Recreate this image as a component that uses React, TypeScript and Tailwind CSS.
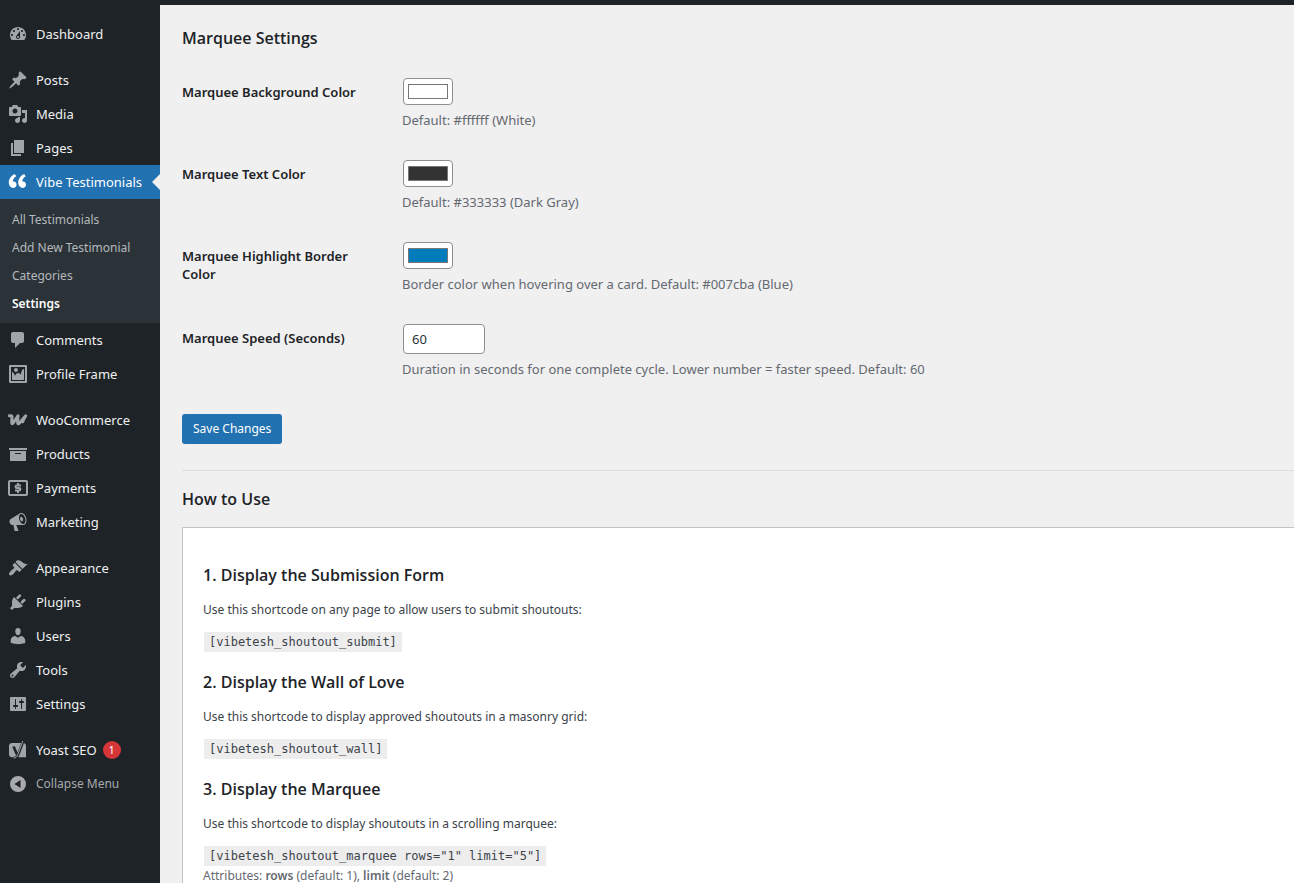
import type { ReactNode } from 'react';
import { clsx } from 'clsx';

const paths = {
  dashboard:
    'M3.76 16h12.48c1.1-1.37 1.76-3.11 1.76-5 0-4.42-3.58-8-8-8s-8 3.58-8 8c0 1.89.66 3.63 1.76 5zM10 4c.55 0 1 .45 1 1s-.45 1-1 1-1-.45-1-1 .45-1 1-1zM6 6c.55 0 1 .45 1 1s-.45 1-1 1-1-.45-1-1 .45-1 1-1zm8 0c.55 0 1 .45 1 1s-.45 1-1 1-1-.45-1-1 .45-1 1-1zm-5.37 5.55L12 7v6c0 1.1-.9 2-2 2s-2-.9-2-2c0-.57.24-1.08.63-1.45zM4 10c.55 0 1 .45 1 1s-.45 1-1 1-1-.45-1-1 .45-1 1-1zm12 0c.55 0 1 .45 1 1s-.45 1-1 1-1-.45-1-1 .45-1 1-1zm-5 3c0-.55-.45-1-1-1s-1 .45-1 1 .45 1 1 1 1-.45 1-1z',
  pin: 'M10.44 3.02l1.82-1.82 6.36 6.35-1.83 1.82c-1.05-.68-2.48-.57-3.41.36l-.75.75c-.92.93-1.04 2.35-.35 3.41l-1.83 1.82-2.41-2.41-2.8 2.79c-.42.42-3.38 2.71-3.8 2.29s1.86-3.39 2.28-3.81l2.79-2.79L4.1 9.36l1.83-1.82c1.05.69 2.48.57 3.4-.36l.75-.75c.93-.92 1.05-2.35.36-3.41z',
  media:
    'M13 11V4c0-.55-.45-1-1-1h-1.67L9 1H5L3.67 3H2c-.55 0-1 .45-1 1v7c0 .55.45 1 1 1h10c.55 0 1-.45 1-1zM7 4.5c1.38 0 2.5 1.12 2.5 2.5S8.38 9.5 7 9.5 4.5 8.38 4.5 7 5.62 4.5 7 4.5zM14 6h5v10.5c0 1.38-1.12 2.5-2.5 2.5S14 17.88 14 16.5s1.12-2.5 2.5-2.5c.17 0 .34.02.5.05V9h-3V6zm-4 8.05V13h2v3.5c0 1.38-1.12 2.5-2.5 2.5S7 17.88 7 16.5 8.12 14 9.5 14c.17 0 .34.02.5.05z',
  page: 'M6 15V2h10v13H6zm-1 1h8v2H3V5h2v11z',
  quote:
    'M8.54 12.74c0-.87-.24-1.61-.72-2.22-.73-.92-2.14-1.03-2.96-.85-.34-1.93 1.3-4.39 3.42-5.45L6.65 1.94C3.45 3.46.31 6.96.85 11.37 1.19 14.16 2.8 16 5.08 16c1 0 1.83-.29 2.48-.88.66-.59.98-1.38.98-2.38zm9.43 0c0-.87-.24-1.61-.72-2.22-.73-.92-2.14-1.03-2.96-.85-.34-1.93 1.3-4.39 3.42-5.45l-1.63-2.28c-3.2 1.52-6.34 5.02-5.8 9.43.34 2.79 1.95 4.63 4.23 4.63 1 0 1.83-.29 2.48-.88.66-.59.98-1.38.98-2.38z',
  comment: 'M5 2h9c1.1 0 2 .9 2 2v7c0 1.1-.9 2-2 2h-2l-5 5v-5H5c-1.1 0-2-.9-2-2V4c0-1.1.9-2 2-2z',
  image:
    'M2.25 1h15.5c.69 0 1.25.56 1.25 1.25v15.5c0 .69-.56 1.25-1.25 1.25H2.25C1.56 19 1 18.44 1 17.75V2.25C1 1.56 1.56 1 2.25 1zM17 17V3H3v14h14zM10 6c0-1.1-.9-2-2-2s-2 .9-2 2 .9 2 2 2 2-.9 2-2zm3 5s0-6 3-6v10c0 .55-.45 1-1 1H5c-.55 0-1-.45-1-1V8c2 0 3 4 3 4s1-3 3-3 3 2 3 2z',
  archive: 'M19 4v2H1V4h18zM2 7h16v10H2V7zm11 3V9H7v1h6z',
  megaphone:
    'M18.15 5.94c.46 1.62.38 3.22-.02 4.48-.42 1.28-1.26 2.18-2.3 2.48-.16.06-.26.06-.4.06-.06.02-.12.02-.18.02-.06.02-.14.02-.22.02h-6.8l2.22 5.5c.02.14-.06.26-.14.34-.08.1-.24.16-.34.16H6.95c-.1 0-.26-.06-.34-.16-.08-.08-.16-.2-.14-.34l-1-5.5H4.25l-.02-.02c-.5.06-1.08-.18-1.54-.62s-.88-1.08-1.06-1.88c-.24-.8-.2-1.56-.02-2.2.18-.62.58-1.08 1.06-1.3l.02-.02 9-5.4c.1-.06.18-.1.24-.16.06-.04.14-.08.24-.12.16-.08.28-.12.5-.18 1.04-.3 2.24.1 3.22.98s1.84 2.24 2.26 3.86zm-2.58 5.98h-.02c.4-.1.74-.34 1.04-.7.58-.7.86-1.76.86-3.04 0-.64-.1-1.3-.28-1.98-.34-1.36-1.02-2.5-1.78-3.24s-1.68-1.1-2.46-.88c-.82.22-1.4.96-1.7 2-.32 1.04-.28 2.36.06 3.72.38 1.36 1 2.5 1.8 3.24.78.74 1.62 1.1 2.48.88zm-2.54-7.08c.22-.04.42-.02.62.04.38.16.76.48 1.02 1s.42 1.2.42 1.78c0 .3-.04.56-.12.8-.18.48-.44.84-.86.94-.34.1-.8-.06-1.14-.4s-.64-.86-.78-1.5c-.18-.62-.12-1.24.02-1.72s.48-.84.82-.94z',
  brush:
    'M14.48 11.06L7.41 3.99l1.5-1.5c.5-.56 2.3-.47 3.51.32 1.21.8 1.43 1.28 2.91 2.1 1.18.64 2.45 1.26 4.45.85zm-.71.71L6.7 4.7 4.93 6.47c-.39.39-.39 1.02 0 1.41l1.06 1.06c.39.39.39 1.03 0 1.42-.6.6-1.43 1.11-2.21 1.69-.35.26-.7.53-1.01.84C1.43 14.23.4 16.08 1.4 17.07c.99 1 2.84-.03 4.18-1.36.31-.31.58-.66.85-1.02.57-.78 1.08-1.61 1.69-2.21.39-.39 1.02-.39 1.41 0l1.06 1.06c.39.39 1.02.39 1.41 0z',
  plug: 'M13.11 4.36L9.87 7.6 8 5.73l3.24-3.24c.35-.34 1.05-.2 1.56.32.52.51.66 1.21.31 1.55zm-8 1.77l.91-1.12 9.01 9.01-1.19.84c-.71.71-2.63 1.16-3.82 1.16H6.14L4.9 17.26c-.59.59-1.54.59-2.12 0-.59-.58-.59-1.53 0-2.12l1.24-1.24v-3.88c0-1.13.4-3.19 1.09-3.89zm7.26 3.97l3.24-3.24c.34-.35 1.04-.21 1.55.31.52.51.66 1.21.31 1.55l-3.24 3.25z',
  user: 'M10 9.25c-2.27 0-2.73-3.44-2.73-3.44C7 4.02 7.82 2 9.97 2c2.16 0 2.98 2.02 2.71 3.81 0 0-.41 3.44-2.68 3.44zm0 2.57L12.72 10c2.39 0 4.52 2.33 4.52 4.53v2.49s-3.65 1.13-7.24 1.13c-3.65 0-7.24-1.13-7.24-1.13v-2.49c0-2.25 1.94-4.48 4.47-4.48z',
  wrench:
    'M16.68 9.77c-1.34 1.34-3.3 1.67-4.95.99l-5.41 6.52c-.99.99-2.59.99-3.58 0s-.99-2.59 0-3.57l6.52-5.42c-.68-1.65-.35-3.61.99-4.95 1.28-1.28 3.12-1.62 4.72-1.06l-2.89 2.89 2.82 2.82 2.86-2.87c.53 1.58.18 3.39-1.08 4.65zM3.81 16.21c.4.39 1.04.39 1.43 0 .4-.4.4-1.04 0-1.43-.39-.4-1.03-.4-1.43 0-.39.39-.39 1.03 0 1.43z',
  sliders:
    'M18 16V4c0-.55-.45-1-1-1H3c-.55 0-1 .45-1 1v12c0 .55.45 1 1 1h14c.55 0 1-.45 1-1zM8 11h1c.55 0 1 .45 1 1s-.45 1-1 1H8v1.5c0 .28-.22.5-.5.5s-.5-.22-.5-.5V13H6c-.55 0-1-.45-1-1s.45-1 1-1h1V5.5c0-.28.22-.5.5-.5s.5.22.5.5V11zm5-2h-1c-.55 0-1-.45-1-1s.45-1 1-1h1V5.5c0-.28.22-.5.5-.5s.5.22.5.5V7h1c.55 0 1 .45 1 1s-.45 1-1 1h-1v5.5c0 .28-.22.5-.5.5s-.5-.22-.5-.5V9z',
  collapse: 'M10 2a8 8 0 1 0 0 16a8 8 0 1 0 0-16zM12.5 6v8L6.5 10z',
};

function Icon({ children }: { children: ReactNode }) {
  return (
    <svg viewBox="0 0 20 20" className="h-5 w-5 shrink-0" fill="currentColor" aria-hidden="true">
      {children}
    </svg>
  );
}

const glyph = (name: keyof typeof paths) => (
  <Icon>
    <path fillRule="evenodd" d={paths[name]} />
  </Icon>
);

const wooIcon = (
  <Icon>
    <path
      d="M1.2 5.8h1.600c.9 0 1.300.5 1.200 1.500l-.3 5c0 1.700.8 1.900 1.700.5L10 5.800l-.4 6.500c0 1.700.9 2 1.900.6L17.700 5.800c-1.200 2-2.700 4.500-2.900 6"
      fill="none"
      stroke="currentColor"
      strokeWidth="3"
      strokeLinecap="round"
      strokeLinejoin="round"
    />
  </Icon>
);

const paymentsIcon = (
  <Icon>
    <rect x="1" y="3" width="18" height="14" rx="1" fill="none" stroke="currentColor" strokeWidth="2" />
    <path
      d="M13 7.400H8.900a1.300 1.300 0 0 0 0 2.600h2.200a1.300 1.300 0 0 1 0 2.600H7M10 5v2.400M10 12.600V15"
      fill="none"
      stroke="currentColor"
      strokeWidth="2"
    />
  </Icon>
);

const yoastIcon = (
  <Icon>
    <path d="M4 3h11c1.700 0 3 1.300 3 3v11.200H4c-1.700 0-3-1.200-3-3V6c0-1.700 1.300-3 3-3z" />
    <path
      d="M5.500 6.500L9 14.500M15.300 1L10 15c-.8 2-1.900 3.200-4.300 3.500"
      fill="none"
      stroke="#1d2327"
      strokeWidth="2.600"
    />
    <path d="M14.800 1L9.700 14.800c-.8 2.100-1.900 3.100-4 3.400" fill="none" stroke="currentColor" strokeWidth="1" />
  </Icon>
);

type Item = { label: string; icon: ReactNode; badge?: string; active?: boolean };

// Each inner list is one block of the menu, blocks are set apart by a gap
const menu: Item[][] = [
  [{ label: 'Dashboard', icon: glyph('dashboard') }],
  [
    { label: 'Posts', icon: glyph('pin') },
    { label: 'Media', icon: glyph('media') },
    { label: 'Pages', icon: glyph('page') },
    { label: 'Vibe Testimonials', icon: glyph('quote'), active: true },
    { label: 'Comments', icon: glyph('comment') },
    { label: 'Profile Frame', icon: glyph('image') },
  ],
  [
    { label: 'WooCommerce', icon: wooIcon },
    { label: 'Products', icon: glyph('archive') },
    { label: 'Payments', icon: paymentsIcon },
    { label: 'Marketing', icon: glyph('megaphone') },
  ],
  [
    { label: 'Appearance', icon: glyph('brush') },
    { label: 'Plugins', icon: glyph('plug') },
    { label: 'Users', icon: glyph('user') },
    { label: 'Tools', icon: glyph('wrench') },
    { label: 'Settings', icon: glyph('sliders') },
  ],
  [{ label: 'Yoast SEO', icon: yoastIcon, badge: '1' }],
];

const submenu = ['All Testimonials', 'Add New Testimonial', 'Categories', 'Settings'];

const colorFields = [
  { id: 'marquee-bg', label: 'Marquee Background Color', value: '#ffffff', help: 'Default: #ffffff (White)' },
  { id: 'marquee-text', label: 'Marquee Text Color', value: '#333333', help: 'Default: #333333 (Dark Gray)' },
  {
    id: 'marquee-border',
    label: 'Marquee Highlight Border Color',
    value: '#007cba',
    help: 'Border color when hovering over a card. Default: #007cba (Blue)',
  },
];

const shortcodes = [
  {
    title: '1. Display the Submission Form',
    text: 'Use this shortcode on any page to allow users to submit shoutouts:',
    code: '[vibetesh_shoutout_submit]',
  },
  {
    title: '2. Display the Wall of Love',
    text: 'Use this shortcode to display approved shoutouts in a masonry grid:',
    code: '[vibetesh_shoutout_wall]',
  },
  {
    title: '3. Display the Marquee',
    text: 'Use this shortcode to display shoutouts in a scrolling marquee:',
    code: '[vibetesh_shoutout_marquee rows="1" limit="5"]',
  },
];

function Sidebar() {
  return (
    <nav className="w-40 shrink-0 bg-[#1d2327] pt-3 text-[13px] leading-[18px] text-[#f0f0f1]">
      <div className="flex flex-col gap-3">
        {menu.map((group) => (
          <ul key={group[0].label}>
            {group.map((item) => (
              <li key={item.label}>
                <a
                  href="#"
                  className={clsx(
                    'relative flex h-[34px] items-center gap-2 pl-2',
                    item.active && 'bg-[#2271b1] text-white',
                  )}
                >
                  <span className={item.active ? 'text-white' : 'text-[#a0a5aa]'}>{item.icon}</span>
                  <span className="whitespace-nowrap">{item.label}</span>
                  {item.badge && (
                    <span className="-ml-0.5 flex h-[18px] w-[18px] items-center justify-center rounded-full bg-[#d63638] text-[11px] text-white">
                      {item.badge}
                    </span>
                  )}
                  {item.active && (
                    <span className="absolute top-1/2 right-0 -translate-y-1/2 border-8 border-l-0 border-transparent border-r-[#f0f0f1]" />
                  )}
                </a>
                {item.active && (
                  <ul className="bg-[#2c3338] pt-[7px] pb-[5px] text-[12px] text-[#b4b9be]">
                    {submenu.map((entry) => (
                      <li key={entry}>
                        <a
                          href="#"
                          className={clsx(
                            'flex h-7 items-center px-3 whitespace-nowrap',
                            entry === 'Settings' && 'font-semibold text-white',
                          )}
                        >
                          {entry}
                        </a>
                      </li>
                    ))}
                  </ul>
                )}
              </li>
            ))}
          </ul>
        ))}
      </div>
      <button type="button" className="flex h-[34px] w-full items-center gap-2 pl-2 text-[12px] text-[#a7aaad]">
        {glyph('collapse')}
        Collapse Menu
      </button>
    </nav>
  );
}

function Field({ id, label, help, children }: { id: string; label: string; help: string; children: ReactNode }) {
  return (
    <div className="grid grid-cols-[200px_1fr] gap-5 py-[15px]">
      <label htmlFor={id} className="pt-[5px] pr-2.5 text-[13px] leading-[18px] font-semibold text-[#1d2327]">
        {label}
      </label>
      <div>
        <div className="flex pl-px">{children}</div>
        <p className="mt-[5px] text-[13px] leading-5 text-[#646970]">{help}</p>
      </div>
    </div>
  );
}

export default function App() {
  return (
    <div className="flex h-screen flex-col overflow-hidden bg-[#f0f0f1] font-['Noto_Sans','Open_Sans',sans-serif] text-[#3c434a]">
      <header className="h-[5px] shrink-0 bg-[#1d2327]" />
      <div className="flex min-h-0 flex-1">
        <Sidebar />
        <main className="min-w-0 flex-1 pl-[22px]">
          <form onSubmit={(e) => e.preventDefault()}>
            <h2 className="mt-5 mb-3 font-['Open_Sans',sans-serif] text-[16px] leading-[26px] font-semibold text-[#1d2327]">
              Marquee Settings
            </h2>
            {colorFields.map((field) => (
              <Field key={field.id} id={field.id} label={field.label} help={field.help}>
                <input
                  id={field.id}
                  type="color"
                  defaultValue={field.value}
                  className="h-[27px] w-[50px] rounded border border-[#8c8f94] bg-white px-0.5 py-px"
                />
              </Field>
            ))}
            <Field
              id="marquee-speed"
              label="Marquee Speed (Seconds)"
              help="Duration in seconds for one complete cycle. Lower number = faster speed. Default: 60"
            >
              <input
                id="marquee-speed"
                type="number"
                defaultValue={60}
                className="h-[30px] w-[82px] rounded border border-[#8c8f94] bg-white px-2 text-[13px] text-[#2c3338]"
              />
            </Field>
            <button
              type="submit"
              className="mt-5 flex h-[30px] items-center rounded-[3px] bg-[#2271b1] px-[11px] text-[12px] text-white"
            >
              Save Changes
            </button>
          </form>

          <hr className="mt-[26px] border-t border-[#dcdcde]" />

          <h2 className="my-[15px] font-['Open_Sans',sans-serif] text-[16px] leading-[26px] font-semibold text-[#1d2327]">
            How to Use
          </h2>
          <section className="border border-r-0 border-[#c3c4c7] bg-white px-5 pt-[34px] text-[12px] leading-5">
            {shortcodes.map((item) => (
              <div key={item.title} className="mb-[17px] last-of-type:mb-0">
                <h3 className="font-['Open_Sans',sans-serif] text-[16px] leading-[26px] font-semibold text-[#1d2327]">
                  {item.title}
                </h3>
                <p className="mt-3">{item.text}</p>
                <code className="mt-3 ml-px block w-fit bg-[#ededee] px-[5px] font-['DejaVu_Sans_Mono',monospace] text-[12px] leading-5">
                  {item.code}
                </code>
              </div>
            ))}
            <p className="text-[#646970]">
              Attributes: <strong className="font-semibold">rows</strong> (default: 1),{' '}
              <strong className="font-semibold">limit</strong> (default: 2)
            </p>
          </section>
        </main>
      </div>
    </div>
  );
}
